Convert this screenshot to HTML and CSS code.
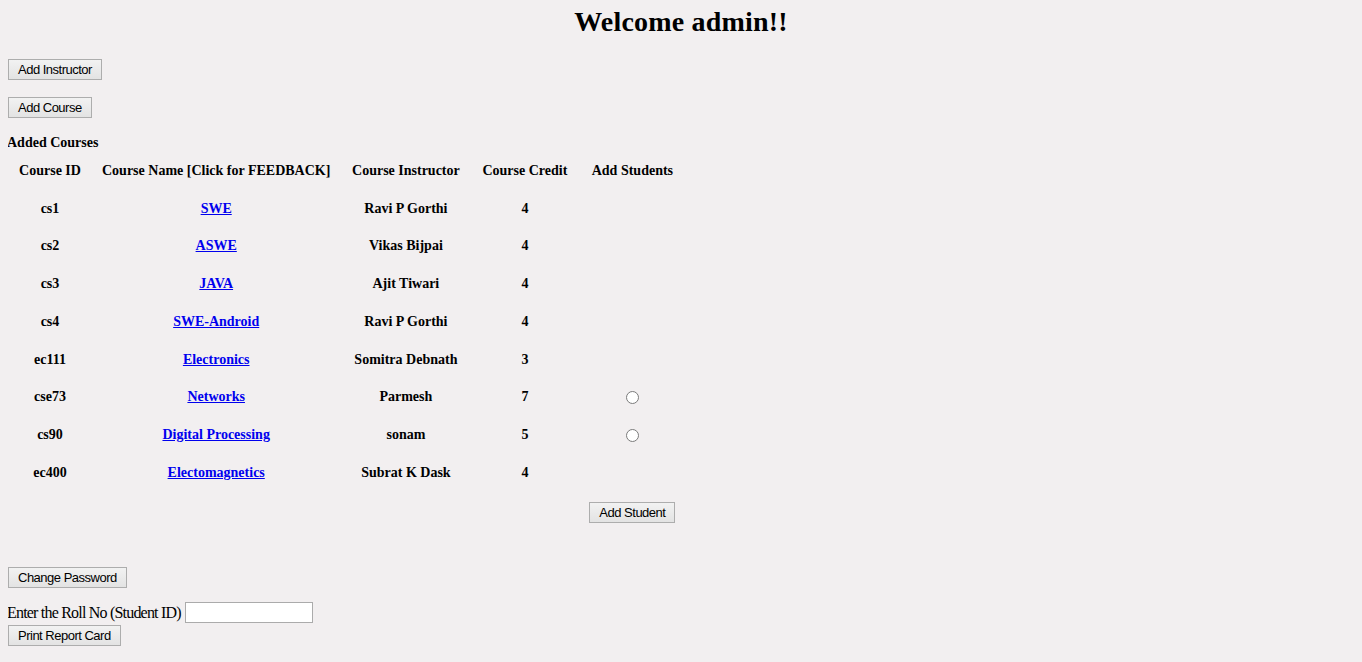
FILE: index.html
```html
<!DOCTYPE html>
<html>
<head>
<meta charset="utf-8">
<title>Admin</title>
<link rel="stylesheet" href="styles.css">
</head>
<body>
<h1 class="title">Welcome admin!!</h1>
<div class="block first"><button class="btn">Add Instructor</button></div>
<div class="block second"><button class="btn">Add Course</button></div>
<table class="courses">
  <caption class="cap">Added Courses</caption>
  <thead>
    <tr><th class="c1">Course ID</th><th class="c2">Course Name [Click for FEEDBACK]</th><th class="c3">Course Instructor</th><th class="c4">Course Credit</th><th class="c5">Add Students</th></tr>
  </thead>
  <tbody>
    <tr><td>cs1</td><td><a href="#">SWE</a></td><td>Ravi P Gorthi</td><td>4</td><td></td></tr>
    <tr><td>cs2</td><td><a href="#">ASWE</a></td><td>Vikas Bijpai</td><td>4</td><td></td></tr>
    <tr><td>cs3</td><td><a href="#">JAVA</a></td><td>Ajit Tiwari</td><td>4</td><td></td></tr>
    <tr><td>cs4</td><td><a href="#">SWE-Android</a></td><td>Ravi P Gorthi</td><td>4</td><td></td></tr>
    <tr><td>ec111</td><td><a href="#">Electronics</a></td><td>Somitra Debnath</td><td>3</td><td></td></tr>
    <tr><td>cse73</td><td><a href="#">Networks</a></td><td>Parmesh</td><td>7</td><td><span class="radio"></span></td></tr>
    <tr><td>cs90</td><td><a href="#">Digital Processing</a></td><td>sonam</td><td>5</td><td><span class="radio"></span></td></tr>
    <tr><td>ec400</td><td><a href="#">Electomagnetics</a></td><td>Subrat K Dask</td><td>4</td><td></td></tr>
    <tr class="btn-row"><td></td><td></td><td></td><td></td><td><button class="btn">Add Student</button></td></tr>
  </tbody>
</table>
<div class="block third"><button class="btn">Change Password</button></div>
<div class="roll"><span class="roll-label">Enter the Roll No (Student ID)</span><span class="field"></span></div>
<div class="block last"><button class="btn">Print Report Card</button></div>
</body>
</html>
```
FILE: styles.css
```css
html { background: #f2eff0; }
body {
  margin: 8px;
  font-family: "Liberation Serif", "Times New Roman", serif;
  font-size: 16px;
  color: #000;
}
.title {
  margin: 0;
  font-size: 28px;
  line-height: 28px;
  text-align: center;
  font-weight: bold;
  letter-spacing: 0.2px;
}
.block { line-height: 0; }
.first { margin-top: 23px; }
.second { margin-top: 17px; }
.third { margin-top: 40px; }
.last { margin-top: 2px; }
.btn {
  font-family: "Liberation Sans", Arial, sans-serif;
  font-size: 13px;
  line-height: 15px;
  height: 21px;
  padding: 2px 9px 2px 9px;
  margin: 0;
  letter-spacing: -0.5px;
  white-space: nowrap;
  background: linear-gradient(#f2f2f2, #e3e3e3);
  border: 1px solid #adadad;
  border-radius: 0;
  color: #000;
}
.courses {
  border-collapse: collapse;
  border-spacing: 0;
  margin-top: 16px;
  font-size: 14px;
  font-weight: bold;
}
.cap {
  text-align: left;
  font-weight: bold;
  font-size: 14px;
  line-height: 18px;
  margin-left: -1px;
}
.courses th, .courses td {
  padding: 10px;
  line-height: 17.7px;
  text-align: center;
  vertical-align: middle;
  box-sizing: border-box;
  white-space: nowrap;
}
.c1 { width: 84px; }
.c2 { width: 248px; }
.c3 { width: 131px; }
.c4 { width: 107px; }
.c5 { width: 108px; }
.courses a { color: #0000ee; text-decoration: underline; }
.radio {
  display: inline-block;
  width: 11px;
  height: 11px;
  border: 1px solid #7b7b7b;
  border-radius: 50%;
  background: #fff;
  vertical-align: middle;
  margin-top: -1px;
}
.btn-row td { padding-top: 11px; padding-bottom: 4px; line-height: 0; }
.roll {
  margin-top: 14px;
  line-height: 21px;
  height: 21px;
  display: flex;
  align-items: center;
  margin-left: -1px;
}
.roll-label { white-space: pre; letter-spacing: -0.8px; }
.field {
  display: inline-block;
  width: 126px;
  height: 19px;
  margin-left: 4px;
  background: #fff;
  border: 1px solid #ababab;
}
```
